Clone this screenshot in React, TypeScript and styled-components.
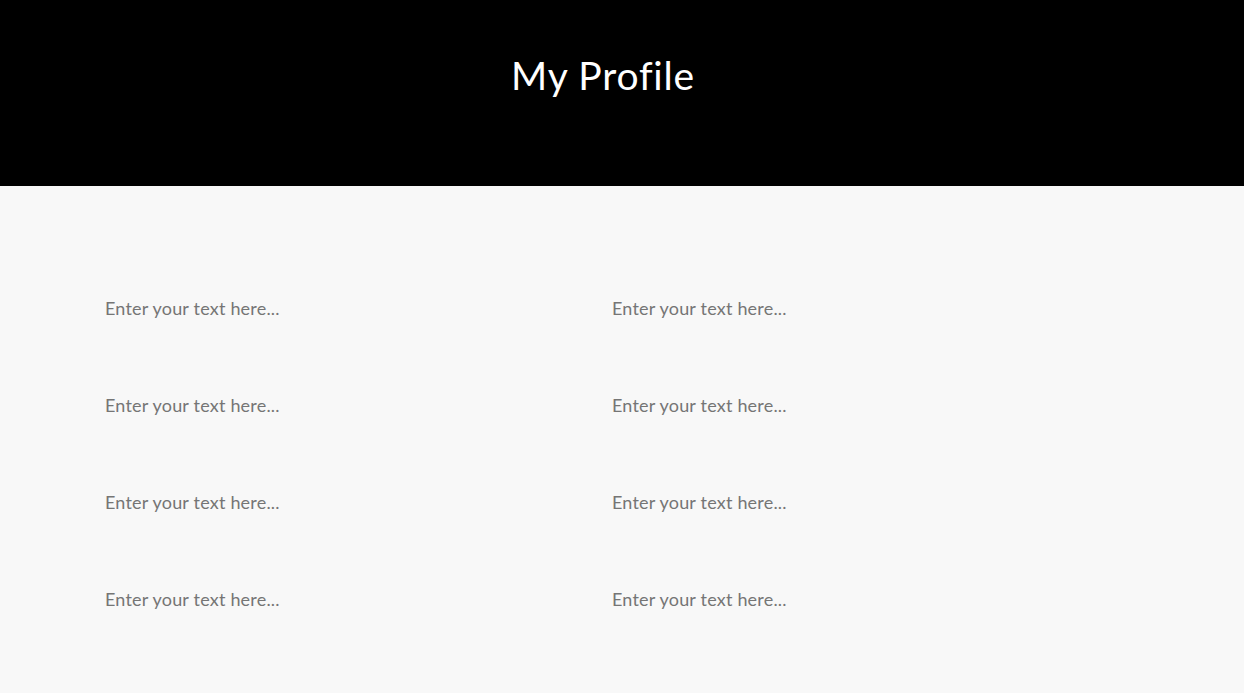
import styled, { createGlobalStyle } from "styled-components";

const GlobalStyle = createGlobalStyle`
  html, body {
    margin: 0;
    padding: 0;
    background: #f8f8f8;
    font-family: Lato, "Open Sans", sans-serif;
  }
`;

const Header = styled.header`
  height: 186px;
  background: #000;
  display: flex;
  justify-content: center;
  padding-right: 38px;
  box-sizing: border-box;
`;

const Title = styled.h1`
  margin: 52px 0 0;
  color: #fff;
  font-weight: 400;
  font-size: 39px;
  letter-spacing: 0.8px;
  line-height: 46px;
  height: 46px;
`;

const Form = styled.form`
  display: grid;
  grid-template-columns: 507px 507px;
  row-gap: 59px;
  padding: 103px 0 0 95px;
`;

const Field = styled.input`
  border: none;
  outline: none;
  background: transparent;
  padding: 0 10px;
  height: 38px;
  font-family: inherit;
  font-size: 18px;
  letter-spacing: 0.2px;
  color: #333;

  &::placeholder {
    color: #757575;
  }
`;

const fields = Array.from({ length: 8 }, (_, i) => i);

const App = () => {
  return (
    <>
      <GlobalStyle />
      <Header>
        <Title>My Profile</Title>
      </Header>
      <Form>
        {fields.map((i) => (
          <Field key={i} type="text" placeholder="Enter your text here..." />
        ))}
      </Form>
    </>
  );
};

export default App;
